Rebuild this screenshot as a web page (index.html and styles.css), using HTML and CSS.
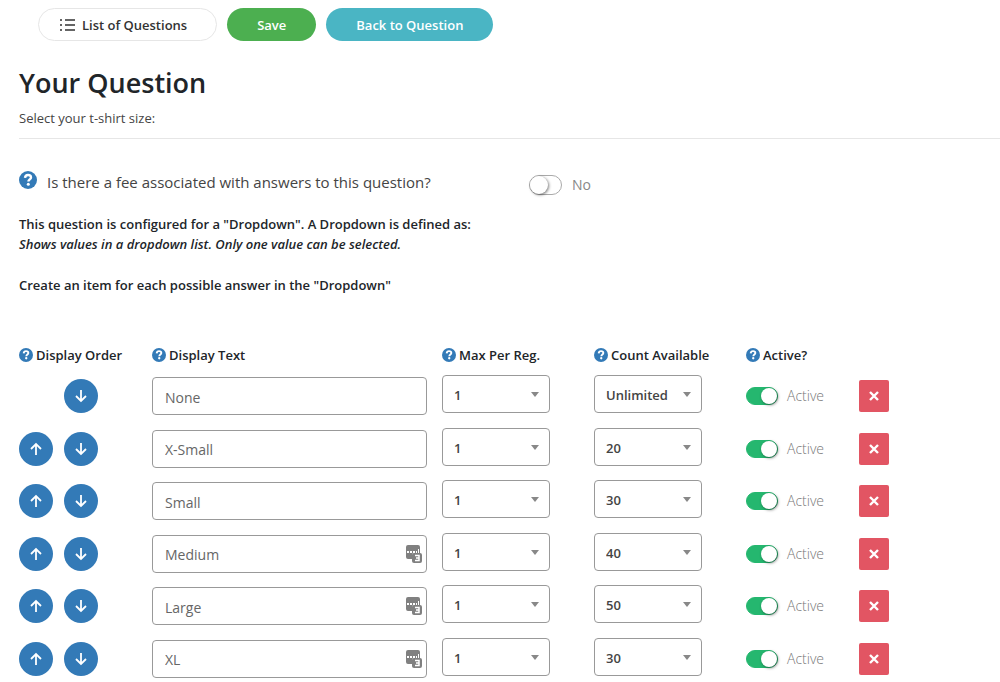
FILE: index.html
```
<!DOCTYPE html>
<html lang="en">
<head>
<meta charset="UTF-8">
<meta name="viewport" content="width=device-width, initial-scale=1">
<title>Your Question</title>
<link rel="stylesheet" href="styles.css">
</head>
<body>

<svg class="sprite" aria-hidden="true">
    <symbol id="help" viewBox="0 0 18 18">
        <circle cx="9" cy="9" r="9" fill="#337ab7"/>
        <path d="M6 6.800C6.200 4.900 7.400 4 9 4c1.800 0 3 1 3 2.500 0 1.900-2.600 2-2.600 4.100" fill="none" stroke="#fff" stroke-width="2.400"/>
        <circle cx="9.300" cy="13.200" r="1.500" fill="#fff"/>
    </symbol>
    <symbol id="up" viewBox="0 0 14 14">
        <path d="M7 13V2M2 7l5-5 5 5" fill="none" stroke="#fff" stroke-width="1.800"/>
    </symbol>
    <symbol id="down" viewBox="0 0 14 14">
        <path d="M7 1v11M2 7l5 5 5-5" fill="none" stroke="#fff" stroke-width="1.800"/>
    </symbol>
    <symbol id="cross" viewBox="0 0 10 10">
        <path d="M1 1l8 8M9 1L1 9" fill="none" stroke="#fff" stroke-width="2.400"/>
    </symbol>
    <symbol id="filler" viewBox="0 0 16 18">
        <path d="M2 0h10a2 2 0 0 1 2 2v6H8a2 2 0 0 0-2 2v4H2a2 2 0 0 1-2-2V2a2 2 0 0 1 2-2z" fill="#808080"/>
        <path d="M1 6h2v2H1zM4 6h2v2H4zM7 6h2v2H7zM10 6h1v2h-1zM12 4h1v4h-1z" fill="#fff"/>
        <rect x="6" y="8" width="10" height="10" rx="2" fill="#808080"/>
        <path d="M9 10.500h4v5H9M10 13h3" fill="none" stroke="#fff" stroke-width="1.500"/>
    </symbol>
</svg>

<div class="toolbar">
    <button type="button" class="pill pill-light">
        <svg class="list-icon" viewBox="0 0 15 13" aria-hidden="true"><path d="M5 2h10M5 7h10M5 12h10M0 2h2M0 7h2M0 12h2" fill="none" stroke="#333" stroke-width="1.500"/></svg>
        List of Questions
    </button>
    <button type="button" class="pill pill-green">Save</button>
    <button type="button" class="pill pill-teal">Back to Question</button>
</div>

<div class="content">
    <h1>Your Question</h1>
    <p class="question">Select your t-shirt size:</p>
    <hr>

    <div class="fee">
        <svg class="help-lg" aria-hidden="true"><use href="#help"/></svg>
        <label class="fee-label" for="fee">Is there a fee associated with answers to this question?</label>
        <input type="checkbox" class="switch switch-lg" id="fee">
        <span class="fee-state">No</span>
    </div>

    <div class="notes">
        <p>This question is configured for a "Dropdown". A Dropdown is defined as:<br>
        <em>Shows values in a dropdown list. Only one value can be selected.</em></p>
        <p>Create an item for each possible answer in the "Dropdown"</p>
    </div>

    <table class="items">
        <thead>
            <tr>
                <th class="col-order"><svg class="help" aria-hidden="true"><use href="#help"/></svg>Display Order</th>
                <th class="col-text"><svg class="help" aria-hidden="true"><use href="#help"/></svg>Display Text</th>
                <th class="col-select"><svg class="help" aria-hidden="true"><use href="#help"/></svg>Max Per Reg.</th>
                <th class="col-select"><svg class="help" aria-hidden="true"><use href="#help"/></svg>Count Available</th>
                <th class="col-active"><svg class="help" aria-hidden="true"><use href="#help"/></svg>Active?</th>
                <td class="col-delete"></td>
            </tr>
        </thead>
        <tbody>
            <tr>
                <td><div class="order"><button type="button" class="move" aria-label="Move down"><svg><use href="#down"/></svg></button></div></td>
                <td><div class="field"><input type="text" value="None" aria-label="Display Text"></div></td>
                <td class="pick"><div class="select"><select aria-label="Max Per Reg."><option>1</option></select></div></td>
                <td class="pick"><div class="select"><select aria-label="Count Available"><option>Unlimited</option></select></div></td>
                <td><label class="active"><input type="checkbox" class="switch" checked>Active</label></td>
                <td><button type="button" class="delete" aria-label="Delete"><svg><use href="#cross"/></svg></button></td>
            </tr>
            <tr>
                <td><div class="order"><button type="button" class="move" aria-label="Move up"><svg><use href="#up"/></svg></button><button type="button" class="move" aria-label="Move down"><svg><use href="#down"/></svg></button></div></td>
                <td><div class="field"><input type="text" value="X-Small" aria-label="Display Text"></div></td>
                <td class="pick"><div class="select"><select aria-label="Max Per Reg."><option>1</option></select></div></td>
                <td class="pick"><div class="select"><select aria-label="Count Available"><option>20</option></select></div></td>
                <td><label class="active"><input type="checkbox" class="switch" checked>Active</label></td>
                <td><button type="button" class="delete" aria-label="Delete"><svg><use href="#cross"/></svg></button></td>
            </tr>
            <tr>
                <td><div class="order"><button type="button" class="move" aria-label="Move up"><svg><use href="#up"/></svg></button><button type="button" class="move" aria-label="Move down"><svg><use href="#down"/></svg></button></div></td>
                <td><div class="field"><input type="text" value="Small" aria-label="Display Text"></div></td>
                <td class="pick"><div class="select"><select aria-label="Max Per Reg."><option>1</option></select></div></td>
                <td class="pick"><div class="select"><select aria-label="Count Available"><option>30</option></select></div></td>
                <td><label class="active"><input type="checkbox" class="switch" checked>Active</label></td>
                <td><button type="button" class="delete" aria-label="Delete"><svg><use href="#cross"/></svg></button></td>
            </tr>
            <tr>
                <td><div class="order"><button type="button" class="move" aria-label="Move up"><svg><use href="#up"/></svg></button><button type="button" class="move" aria-label="Move down"><svg><use href="#down"/></svg></button></div></td>
                <td><div class="field"><input type="text" value="Medium" aria-label="Display Text"><svg class="filler"><use href="#filler"/></svg></div></td>
                <td class="pick"><div class="select"><select aria-label="Max Per Reg."><option>1</option></select></div></td>
                <td class="pick"><div class="select"><select aria-label="Count Available"><option>40</option></select></div></td>
                <td><label class="active"><input type="checkbox" class="switch" checked>Active</label></td>
                <td><button type="button" class="delete" aria-label="Delete"><svg><use href="#cross"/></svg></button></td>
            </tr>
            <tr>
                <td><div class="order"><button type="button" class="move" aria-label="Move up"><svg><use href="#up"/></svg></button><button type="button" class="move" aria-label="Move down"><svg><use href="#down"/></svg></button></div></td>
                <td><div class="field"><input type="text" value="Large" aria-label="Display Text"><svg class="filler"><use href="#filler"/></svg></div></td>
                <td class="pick"><div class="select"><select aria-label="Max Per Reg."><option>1</option></select></div></td>
                <td class="pick"><div class="select"><select aria-label="Count Available"><option>50</option></select></div></td>
                <td><label class="active"><input type="checkbox" class="switch" checked>Active</label></td>
                <td><button type="button" class="delete" aria-label="Delete"><svg><use href="#cross"/></svg></button></td>
            </tr>
            <tr>
                <td><div class="order"><button type="button" class="move" aria-label="Move up"><svg><use href="#up"/></svg></button><button type="button" class="move" aria-label="Move down"><svg><use href="#down"/></svg></button></div></td>
                <td><div class="field"><input type="text" value="XL" aria-label="Display Text"><svg class="filler"><use href="#filler"/></svg></div></td>
                <td class="pick"><div class="select"><select aria-label="Max Per Reg."><option>1</option></select></div></td>
                <td class="pick"><div class="select"><select aria-label="Count Available"><option>30</option></select></div></td>
                <td><label class="active"><input type="checkbox" class="switch" checked>Active</label></td>
                <td><button type="button" class="delete" aria-label="Delete"><svg><use href="#cross"/></svg></button></td>
            </tr>
        </tbody>
    </table>
</div>

</body>
</html>
```
FILE: styles.css
```
* {
    box-sizing: border-box;
}
body {
    margin: 0;
    background: #fff;
    color: #212529;
    font-family: "Segoe UI", "Open Sans", "Noto Sans", sans-serif;
    font-size: 13px;
    line-height: 20px;
}
button, input, select {
    font-family: inherit;
    margin: 0;
}
.sprite {
    display: none;
}

/* top buttons */
.toolbar {
    display: flex;
    gap: 10px;
    padding: 8px 0 0 38px;
}
.pill {
    display: flex;
    align-items: center;
    height: 33px;
    padding: 0 30px;
    border: none;
    border-radius: 17px;
    color: #fff;
    font-size: 13px;
    font-weight: 600;
    cursor: pointer;
}
.pill-light {
    padding: 0 29px 0 21px;
    border: 1px solid #e6e6e6;
    background: #fff;
    color: #333;
}
.pill-green {
    background: #4caf50;
}
.pill-teal {
    background: #4ab5c4;
}
.list-icon {
    width: 15px;
    height: 13px;
    margin-right: 7px;
}

.content {
    padding-left: 19px;
}
h1 {
    margin: 22px 0 0;
    font-size: 27px;
    font-weight: 600;
    line-height: 40px;
}
.question {
    margin: 5px 0 10px;
    color: #444;
}
hr {
    margin: 0;
    border: 0;
    border-top: 1px solid #e6e6e6;
}

/* fee question */
.fee {
    display: flex;
    align-items: center;
    height: 24px;
    margin-top: 31px;
    font-size: 15px;
    color: #444;
}
.help-lg {
    width: 18px;
    height: 18px;
    margin: 0 10px 4px 0;
}
.fee-label {
    width: 482px;
}
.fee-state {
    padding-top: 6px;
    color: #888;
    font-size: 14px;
}
.switch {
    position: relative;
    flex: none;
    appearance: none;
    width: 32px;
    height: 18px;
    border: 1px solid #aaa;
    border-radius: 10px;
    background: #fff;
    cursor: pointer;
}
.switch::after {
    content: "";
    position: absolute;
    top: 0;
    left: 0;
    width: 16px;
    height: 16px;
    border-radius: 50%;
    background: #fff;
    box-shadow: 1px 1px 3px rgba(0, 0, 0, 0.5);
}
.switch:checked {
    border-color: #25b76f;
    background: #25b76f;
}
.switch:checked::after {
    left: auto;
    right: 0;
}
.switch-lg {
    width: 33px;
    height: 20px;
    margin: 6px 10px 0 0;
}
.switch-lg::after {
    width: 18px;
    height: 18px;
}

.notes {
    margin-top: 20px;
    font-weight: 600;
}
.notes p {
    margin: 0 0 21px;
}

/* answer items */
.items {
    width: 100%;
    margin-top: 50px;
    border-collapse: collapse;
    table-layout: fixed;
}
.items th, .items td {
    padding: 0;
    text-align: left;
    font-weight: inherit;
}
.items th {
    padding-bottom: 5px;
    font-weight: 600;
    white-space: nowrap;
}
.items tbody tr {
    height: 52px;
}
.items tbody tr:nth-child(even) {
    height: 53px;
}
.col-order {
    width: 133px;
}
.col-select {
    width: 152px;
}
.col-active {
    width: 113px;
}
.col-delete {
    width: 141px;
}
.help {
    width: 14px;
    height: 14px;
    margin-right: 3px;
    vertical-align: -2px;
}
.order {
    display: flex;
    justify-content: flex-end;
    gap: 11px;
    width: 79px;
}
.move {
    display: flex;
    align-items: center;
    justify-content: center;
    width: 34px;
    height: 34px;
    padding: 0;
    border: none;
    border-radius: 50%;
    background: #337ab7;
    cursor: pointer;
}
.move svg {
    width: 14px;
    height: 14px;
}
.field {
    position: relative;
    margin-right: 15px;
}
.field input {
    display: block;
    width: 100%;
    height: 38px;
    padding: 2px 30px 0 12px;
    border: 1px solid #999;
    border-radius: 4px;
    color: #666;
    font-size: 14px;
}
.filler {
    position: absolute;
    top: 10px;
    right: 5px;
    width: 16px;
    height: 18px;
}
.items .pick {
    padding-bottom: 4px;
}
.select {
    position: relative;
    width: 108px;
}
.select select {
    display: block;
    appearance: none;
    width: 100%;
    height: 38px;
    padding: 2px 24px 0 11px;
    border: 1px solid #999;
    border-radius: 4px;
    background: #fff;
    color: #444;
    font-size: 13px;
    font-weight: 600;
}
.select::after {
    content: "";
    position: absolute;
    top: 17px;
    right: 11px;
    border: 4px solid transparent;
    border-top: 5px solid #888;
    border-bottom: 0;
    pointer-events: none;
}
.active {
    display: flex;
    align-items: center;
    gap: 9px;
    color: #777;
    font-size: 14px;
    font-weight: 300;
}
.delete {
    display: flex;
    align-items: center;
    justify-content: center;
    width: 30px;
    height: 32px;
    padding: 0;
    border: none;
    border-radius: 2px;
    background: #e25563;
    cursor: pointer;
}
.delete svg {
    width: 10px;
    height: 10px;
}
```
